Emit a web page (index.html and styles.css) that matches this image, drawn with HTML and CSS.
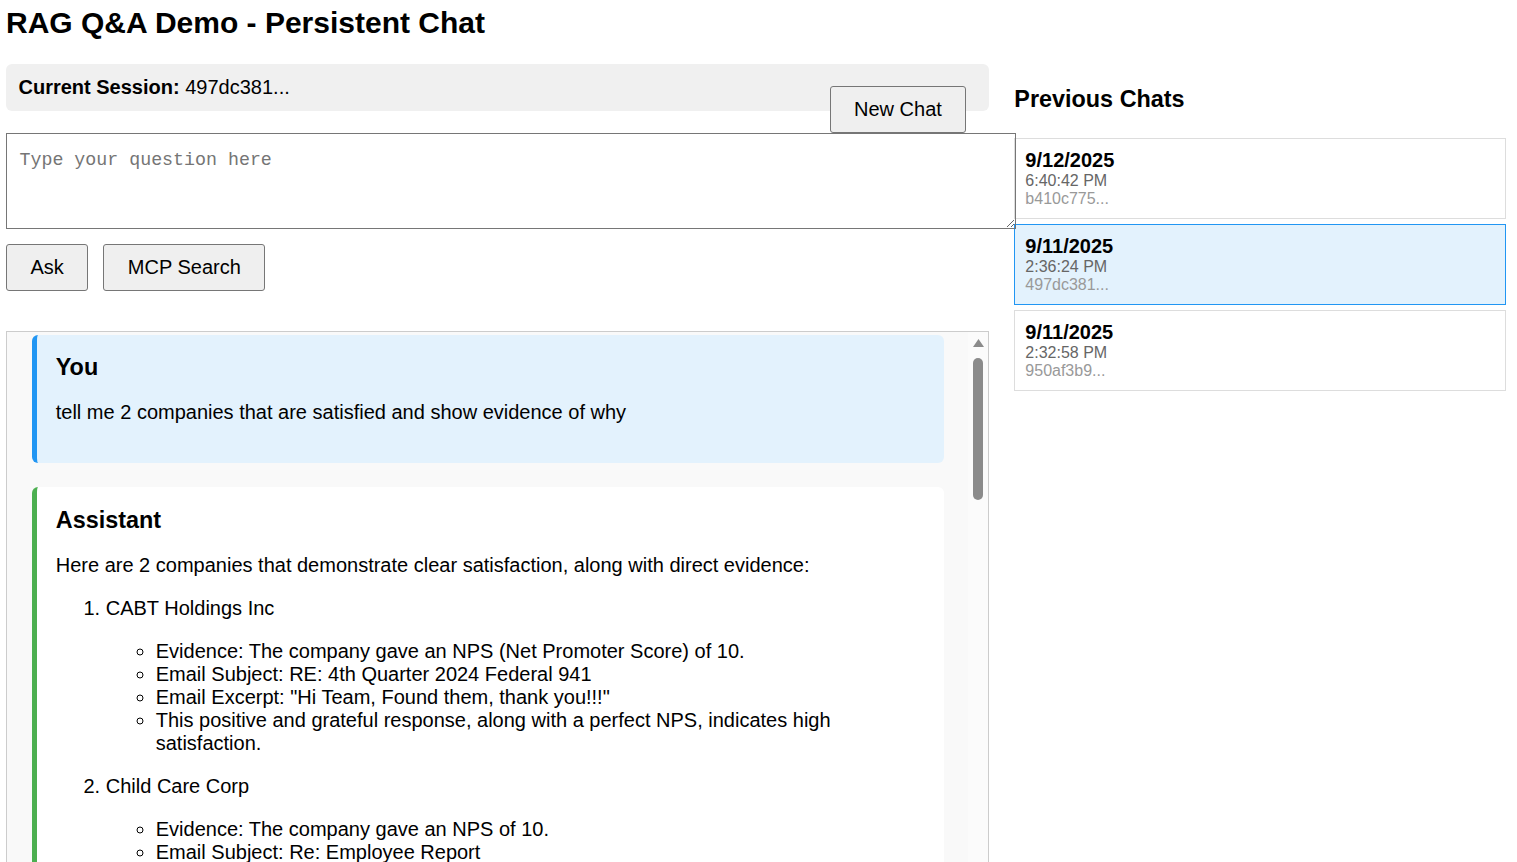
FILE: index.html
```html
<!DOCTYPE html>
<html lang="en">
<head>
<meta charset="utf-8">
<title>RAG Q&amp;A Demo - Persistent Chat</title>
<link rel="stylesheet" href="styles.css">
</head>
<body>
<h1 class="title">RAG Q&amp;A Demo - Persistent Chat</h1>
<div class="layout">
  <main class="main">
    <div class="session">
      <span class="session-text"><strong>Current Session:</strong> 497dc381...</span>
      <button class="btn btn-new">New Chat</button>
    </div>
    <textarea class="question" placeholder="Type your question here"></textarea>
    <div class="actions">
      <button class="btn">Ask</button>
      <button class="btn">MCP Search</button>
    </div>
    <div class="chat">
      <div class="chat-content">
        <div class="msg msg-user">
          <h3 class="msg-role">You</h3>
          <p class="msg-p">tell me 2 companies that are satisfied and show evidence of why</p>
        </div>
        <div class="msg msg-assistant">
          <h3 class="msg-role">Assistant</h3>
          <p class="msg-p">Here are 2 companies that demonstrate clear satisfaction, along with direct evidence:</p>
          <ol class="olist">
            <li>
              <p class="msg-p">CABT Holdings Inc</p>
              <ul class="ulist">
                <li>Evidence: The company gave an NPS (Net Promoter Score) of 10.</li>
                <li>Email Subject: RE: 4th Quarter 2024 Federal 941</li>
                <li>Email Excerpt: "Hi Team, Found them, thank you!!!"</li>
                <li>This positive and grateful response, along with a perfect NPS, indicates high satisfaction.</li>
              </ul>
            </li>
            <li>
              <p class="msg-p">Child Care Corp</p>
              <ul class="ulist">
                <li>Evidence: The company gave an NPS of 10.</li>
                <li>Email Subject: Re: Employee Report</li>
                <li>Email Excerpt: "Thank you so much, this is exactly what we needed!"</li>
                <li>The appreciative tone and top NPS rating show the client is very satisfied.</li>
              </ul>
            </li>
          </ol>
          <p class="msg-p">Both companies gave the highest possible NPS and expressed gratitude in their email replies.</p>
        </div>
      </div>
      <div class="scrollbar" aria-hidden="true">
        <svg class="scroll-arrow" width="11" height="8" viewBox="0 0 11 8"><polygon points="5.5,0 11,8 0,8" fill="#8b8b8b"/></svg>
        <div class="scroll-thumb"></div>
      </div>
    </div>
  </main>
  <aside class="sidebar">
    <h3 class="side-title">Previous Chats</h3>
    <div class="item">
      <div class="item-date">9/12/2025</div>
      <div class="item-time">6:40:42 PM</div>
      <div class="item-id">b410c775...</div>
    </div>
    <div class="item item-active">
      <div class="item-date">9/11/2025</div>
      <div class="item-time">2:36:24 PM</div>
      <div class="item-id">497dc381...</div>
    </div>
    <div class="item">
      <div class="item-date">9/11/2025</div>
      <div class="item-time">2:32:58 PM</div>
      <div class="item-id">950af3b9...</div>
    </div>
  </aside>
</div>
</body>
</html>
```
FILE: styles.css
```css
html {
  overflow: hidden;
}
body {
  margin: 6px;
  font-family: "Liberation Sans", Arial, sans-serif;
  font-size: 20px;
  color: #000;
  background: #fff;
}
.title {
  margin: 0 0 23.5px;
  font-size: 30px;
  font-weight: bold;
  line-height: normal;
}
.layout {
  display: flex;
  gap: 25px;
  width: 1500px;
  align-items: flex-start;
}
.main {
  flex: 2 1 0;
  min-width: 0;
}
.sidebar {
  flex: 1 1 0;
  min-width: 0;
}
.session {
  display: flex;
  justify-content: space-between;
  align-items: flex-start;
  height: 47px;
  box-sizing: border-box;
  padding: 12.5px 23px 0 12.5px;
  background: #f0f0f0;
  border-radius: 6px;
  line-height: 23px;
}
.btn {
  font-family: "Liberation Sans", Arial, sans-serif;
  font-size: 20px;
  line-height: 23px;
  padding: 11px 23.5px;
  background: #efefef;
  border: 1px solid #767676;
  border-radius: 3px;
  color: #000;
}
.btn-new {
  margin-top: 9.5px;
  position: relative;
  z-index: 1;
}
.question {
  display: block;
  margin-top: 22px;
  width: calc(100% + 27px);
  height: 96px;
  box-sizing: border-box;
  padding: 12.5px;
  border: 1px solid #767676;
  font-family: "Liberation Mono", monospace;
  font-size: 18.3px;
  line-height: 28px;
  resize: both;
  position: relative;
  z-index: 1;
  background: transparent;
}
.question::placeholder {
  color: #757575;
}
.actions {
  display: flex;
  gap: 15px;
  margin-top: 15px;
}
.chat {
  display: flex;
  margin-top: 40px;
  height: 600px;
  background: #f9f9f9;
  border: 1px solid #ccc;
}
.chat-content {
  flex: 1 1 auto;
  min-width: 0;
  overflow: hidden;
  padding: 3px 24px 0 25px;
}
.scrollbar {
  flex: 0 0 20px;
  display: flex;
  flex-direction: column;
  align-items: center;
  background: #fbfbfb;
}
.scroll-arrow {
  display: block;
  margin-top: 7px;
}
.scroll-thumb {
  margin-top: 11px;
  width: 10px;
  height: 142px;
  border-radius: 5px;
  background: #8b8b8b;
}
.msg {
  padding: 18.75px;
  border-radius: 6px;
  margin-bottom: 24px;
  line-height: 23px;
}
.msg-user {
  background: #e3f2fd;
  border-left: 5px solid #2196f3;
}
.msg-assistant {
  background: #fff;
  border-left: 5px solid #4caf50;
}
.msg-role {
  margin: 0;
  font-size: 23.4px;
  line-height: 28px;
  font-weight: bold;
}
.msg-p {
  margin: 20px 0;
}
.olist {
  margin: 20px 0;
  padding-left: 50px;
}
.ulist {
  margin: 0;
  padding-left: 50px;
  list-style-type: circle;
}
.side-title {
  margin: 22.5px 0 24.5px;
  font-size: 23.4px;
  line-height: 27px;
  font-weight: bold;
}
.item {
  border: 1px solid #ddd;
  padding: 10px;
  margin-bottom: 5px;
  background: #fff;
  position: relative;
}
.item-active {
  background: #e3f2fd;
  border-color: #2196f3;
}
.item-date {
  font-size: 20px;
  font-weight: bold;
  line-height: 23px;
}
.item-time {
  font-size: 16px;
  line-height: 18px;
  color: #666;
}
.item-id {
  font-size: 16px;
  line-height: 18px;
  color: #999;
}
```
